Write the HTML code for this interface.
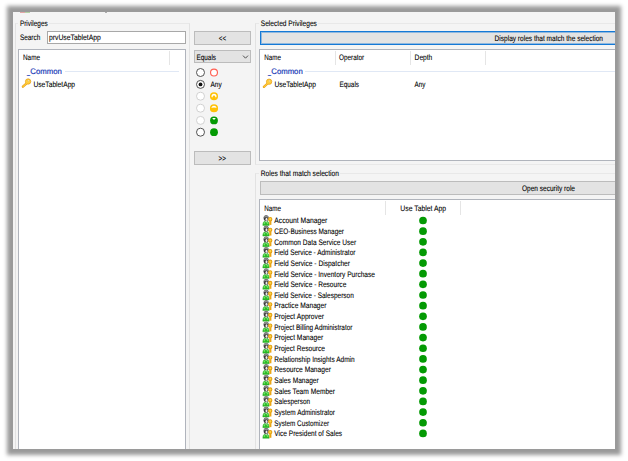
<!DOCTYPE html>
<html lang="en">
<head>
<meta charset="utf-8">
<title>Privileges</title>
<style>
html,body{margin:0;padding:0;background:#fff;}
body{width:628px;height:461px;overflow:hidden;position:relative;font-family:"Liberation Sans",sans-serif;}
#win{position:absolute;left:13px;top:12px;width:602px;height:437px;background:#f4f4f4;overflow:hidden;}
#shadow{position:absolute;left:13px;top:12px;width:602px;height:437px;box-shadow:0 0 4px 6px #9a9a9a;}
#win div{position:absolute;box-sizing:border-box;}
.t{position:absolute;left:0;top:0;white-space:pre;font-size:8.0px;line-height:9px;transform-origin:0 0;color:#000;text-rendering:geometricPrecision;-webkit-text-stroke:0.1px;}
.gb{border:1px solid;border-color:#e8e8e8 #e2e2e2;}
.lv{background:#fff;border:1px solid #b0b4bc;}
.btn{background:#e3e3e3;border:1px solid #bcbcbc;}
.sep{background:#e5e5e5;width:1px;}
.gl{background:#e0e8f5;height:1px;}
.lbl{background:#f4f4f4;height:8px;}
#ov{position:absolute;left:0;top:0;}
</style>
</head>
<body>
<div id="shadow"></div>
<div id="win">
<!-- title remnants -->
<div style="left:7px;top:0;width:5px;height:1px;background:#c44;opacity:.45"></div>
<div style="left:12px;top:0;width:5px;height:1px;background:#6a4;opacity:.45"></div>
<div style="left:92px;top:0;width:2px;height:1px;background:#555;opacity:.45"></div>
<!-- Privileges group -->
<div class="gb" style="left:2px;top:11px;width:175px;height:440px"></div>
<div class="lbl" style="left:5px;top:7px;width:31px"></div>
<div style="left:34px;top:19px;width:139px;height:13px;background:#fff;border:1px solid #a8a8a8"></div>
<div class="lv" style="left:5px;top:37px;width:168px;height:410px"></div>
<div class="sep" style="left:156px;top:39px;height:14px"></div>
<div class="gl" style="left:52px;top:59px;width:114px"></div>
<!-- middle column -->
<div class="btn" style="left:181px;top:19px;width:57px;height:14px"></div>
<div class="btn" style="left:181px;top:38px;width:57px;height:13px"></div>
<div class="btn" style="left:181px;top:139px;width:57px;height:14px"></div>
<!-- Selected Privileges group -->
<div class="gb" style="left:242px;top:11px;width:400px;height:142px"></div>
<div class="lbl" style="left:246px;top:7px;width:59px"></div>
<div class="btn" style="left:247px;top:19px;width:400px;height:14px;border:1px solid #1479d6;box-shadow:inset 0 0 0 1px rgba(20,121,214,.4)"></div>
<div class="lv" style="left:246px;top:37px;width:400px;height:112px"></div>
<div class="sep" style="left:322px;top:39px;height:14px"></div>
<div class="sep" style="left:397px;top:39px;height:14px"></div>
<div class="sep" style="left:472px;top:39px;height:14px"></div>
<div class="gl" style="left:292px;top:59px;width:330px"></div>
<!-- Roles that match selection group -->
<div class="gb" style="left:242px;top:161px;width:400px;height:300px"></div>
<div class="lbl" style="left:246px;top:157px;width:81px"></div>
<div class="btn" style="left:247px;top:169px;width:400px;height:14px"></div>
<div class="lv" style="left:246px;top:187px;width:400px;height:300px"></div>
<div class="sep" style="left:372px;top:189px;height:14px"></div>
<div class="sep" style="left:447px;top:189px;height:14px"></div>
<svg id="ov" width="602" height="437" viewBox="0 0 602 437">
<circle cx="187.50" cy="60.50" r="4" fill="#fff" stroke="#4a4a4a" stroke-width="0.95"/>
<circle cx="187.50" cy="72.40" r="4" fill="#fff" stroke="#4a4a4a" stroke-width="0.95"/>
<circle cx="187.50" cy="84.20" r="4" fill="#fff" stroke="#cfcfcf" stroke-width="0.95"/>
<circle cx="187.50" cy="96.20" r="4" fill="#fff" stroke="#cfcfcf" stroke-width="0.95"/>
<circle cx="187.50" cy="108.40" r="4" fill="#fff" stroke="#cfcfcf" stroke-width="0.95"/>
<circle cx="187.50" cy="120.20" r="4" fill="#fff" stroke="#4a4a4a" stroke-width="0.95"/>
<circle cx="187.50" cy="72.40" r="1.9" fill="#111"/>
<circle cx="201" cy="60.5" r="3.45" fill="#fff" stroke="#ff5f52" stroke-width="1.15"/>
<circle cx="201" cy="84.2" r="3.3" fill="#fff" stroke="#ffc107" stroke-width="1.5"/>
<path d="M197.7 85.2L204.3 85.2A3.6 3.6 0 0 1 197.7 85.2z" fill="#ffc107"/>
<circle cx="201" cy="84.9" r="1.35" fill="#ffc107"/>
<circle cx="201" cy="96.2" r="3.3" fill="#fff" stroke="#ffc107" stroke-width="1.5"/>
<path d="M197.1 96.0Q201 95.0 204.9 96.0A3.9 3.9 0 0 1 197.1 96.0z" fill="#ffc107"/>
<circle cx="201" cy="108.4" r="3.9" fill="#049a04"/>
<path d="M199.1 105.9L202.9 105.9L201 108.0z" fill="#fff"/>
<circle cx="201" cy="120.19999999999999" r="3.9" fill="#049a04"/>
<path d="M230 43.6L232.5 46.2L235 43.6" fill="none" stroke="#404040" stroke-width="0.9"/>
<g transform="translate(9,66)"><line x1="4.6" y1="5.3" x2="0.9" y2="8.7" stroke="#e9a11c" stroke-width="2.3" stroke-linecap="round"/><circle cx="6.1" cy="3.5" r="2.65" fill="#ffd040" stroke="#e9a11c" stroke-width="0.8"/><line x1="4.7" y1="5.2" x2="1" y2="8.6" stroke="#ffcd38" stroke-width="1.1" stroke-linecap="round"/><circle cx="6.5" cy="2.8" r="0.75" fill="#f6f2e6" stroke="#d9a030" stroke-width="0.3"/></g>
<g transform="translate(250,66.2)"><line x1="4.6" y1="5.3" x2="0.9" y2="8.7" stroke="#e9a11c" stroke-width="2.3" stroke-linecap="round"/><circle cx="6.1" cy="3.5" r="2.65" fill="#ffd040" stroke="#e9a11c" stroke-width="0.8"/><line x1="4.7" y1="5.2" x2="1" y2="8.6" stroke="#ffcd38" stroke-width="1.1" stroke-linecap="round"/><circle cx="6.5" cy="2.8" r="0.75" fill="#f6f2e6" stroke="#d9a030" stroke-width="0.3"/></g>
<g transform="translate(249.80,203.50)"><path d="M0 9.9C0 7 0.8 5.5 3.2 5.5C5.6 5.5 6.4 7 6.4 9.9z" fill="#2cbd27" stroke="#1f9e1b" stroke-width="0.4"/><ellipse cx="1.5" cy="7.6" rx="0.8" ry="1.1" fill="#74e068"/><ellipse cx="4.9" cy="7.6" rx="0.8" ry="1.1" fill="#74e068"/><path d="M2.5 5.6L3.3 7.4L4.1 5.6z" fill="#f3e6ef"/><ellipse cx="3.35" cy="2.6" rx="2.55" ry="2.9" fill="#3a3a3a"/><path d="M0.9 2.2C1 -0.9 5.7 -0.9 5.8 2.2C4.6 1.5 2.1 1.5 0.9 2.2z" fill="#8e8e8e"/><ellipse cx="3.7" cy="3.7" rx="1" ry="1.5" fill="#ececec"/><circle cx="7.4" cy="3.7" r="1.65" fill="#ffd544" stroke="#e3a012" stroke-width="1.1"/><rect x="6.5" y="5.5" width="2.1" height="3.9" fill="#e9a616"/></g>
<circle cx="410" cy="208.50" r="3.85" fill="#049a04"/>
<g transform="translate(249.80,214.15)"><path d="M0 9.9C0 7 0.8 5.5 3.2 5.5C5.6 5.5 6.4 7 6.4 9.9z" fill="#2cbd27" stroke="#1f9e1b" stroke-width="0.4"/><ellipse cx="1.5" cy="7.6" rx="0.8" ry="1.1" fill="#74e068"/><ellipse cx="4.9" cy="7.6" rx="0.8" ry="1.1" fill="#74e068"/><path d="M2.5 5.6L3.3 7.4L4.1 5.6z" fill="#f3e6ef"/><ellipse cx="3.35" cy="2.6" rx="2.55" ry="2.9" fill="#3a3a3a"/><path d="M0.9 2.2C1 -0.9 5.7 -0.9 5.8 2.2C4.6 1.5 2.1 1.5 0.9 2.2z" fill="#8e8e8e"/><ellipse cx="3.7" cy="3.7" rx="1" ry="1.5" fill="#ececec"/><circle cx="7.4" cy="3.7" r="1.65" fill="#ffd544" stroke="#e3a012" stroke-width="1.1"/><rect x="6.5" y="5.5" width="2.1" height="3.9" fill="#e9a616"/></g>
<circle cx="410" cy="219.15" r="3.85" fill="#049a04"/>
<g transform="translate(249.80,224.79)"><path d="M0 9.9C0 7 0.8 5.5 3.2 5.5C5.6 5.5 6.4 7 6.4 9.9z" fill="#2cbd27" stroke="#1f9e1b" stroke-width="0.4"/><ellipse cx="1.5" cy="7.6" rx="0.8" ry="1.1" fill="#74e068"/><ellipse cx="4.9" cy="7.6" rx="0.8" ry="1.1" fill="#74e068"/><path d="M2.5 5.6L3.3 7.4L4.1 5.6z" fill="#f3e6ef"/><ellipse cx="3.35" cy="2.6" rx="2.55" ry="2.9" fill="#3a3a3a"/><path d="M0.9 2.2C1 -0.9 5.7 -0.9 5.8 2.2C4.6 1.5 2.1 1.5 0.9 2.2z" fill="#8e8e8e"/><ellipse cx="3.7" cy="3.7" rx="1" ry="1.5" fill="#ececec"/><circle cx="7.4" cy="3.7" r="1.65" fill="#ffd544" stroke="#e3a012" stroke-width="1.1"/><rect x="6.5" y="5.5" width="2.1" height="3.9" fill="#e9a616"/></g>
<circle cx="410" cy="229.79" r="3.85" fill="#049a04"/>
<g transform="translate(249.80,235.44)"><path d="M0 9.9C0 7 0.8 5.5 3.2 5.5C5.6 5.5 6.4 7 6.4 9.9z" fill="#2cbd27" stroke="#1f9e1b" stroke-width="0.4"/><ellipse cx="1.5" cy="7.6" rx="0.8" ry="1.1" fill="#74e068"/><ellipse cx="4.9" cy="7.6" rx="0.8" ry="1.1" fill="#74e068"/><path d="M2.5 5.6L3.3 7.4L4.1 5.6z" fill="#f3e6ef"/><ellipse cx="3.35" cy="2.6" rx="2.55" ry="2.9" fill="#3a3a3a"/><path d="M0.9 2.2C1 -0.9 5.7 -0.9 5.8 2.2C4.6 1.5 2.1 1.5 0.9 2.2z" fill="#8e8e8e"/><ellipse cx="3.7" cy="3.7" rx="1" ry="1.5" fill="#ececec"/><circle cx="7.4" cy="3.7" r="1.65" fill="#ffd544" stroke="#e3a012" stroke-width="1.1"/><rect x="6.5" y="5.5" width="2.1" height="3.9" fill="#e9a616"/></g>
<circle cx="410" cy="240.44" r="3.85" fill="#049a04"/>
<g transform="translate(249.80,246.08)"><path d="M0 9.9C0 7 0.8 5.5 3.2 5.5C5.6 5.5 6.4 7 6.4 9.9z" fill="#2cbd27" stroke="#1f9e1b" stroke-width="0.4"/><ellipse cx="1.5" cy="7.6" rx="0.8" ry="1.1" fill="#74e068"/><ellipse cx="4.9" cy="7.6" rx="0.8" ry="1.1" fill="#74e068"/><path d="M2.5 5.6L3.3 7.4L4.1 5.6z" fill="#f3e6ef"/><ellipse cx="3.35" cy="2.6" rx="2.55" ry="2.9" fill="#3a3a3a"/><path d="M0.9 2.2C1 -0.9 5.7 -0.9 5.8 2.2C4.6 1.5 2.1 1.5 0.9 2.2z" fill="#8e8e8e"/><ellipse cx="3.7" cy="3.7" rx="1" ry="1.5" fill="#ececec"/><circle cx="7.4" cy="3.7" r="1.65" fill="#ffd544" stroke="#e3a012" stroke-width="1.1"/><rect x="6.5" y="5.5" width="2.1" height="3.9" fill="#e9a616"/></g>
<circle cx="410" cy="251.08" r="3.85" fill="#049a04"/>
<g transform="translate(249.80,256.72)"><path d="M0 9.9C0 7 0.8 5.5 3.2 5.5C5.6 5.5 6.4 7 6.4 9.9z" fill="#2cbd27" stroke="#1f9e1b" stroke-width="0.4"/><ellipse cx="1.5" cy="7.6" rx="0.8" ry="1.1" fill="#74e068"/><ellipse cx="4.9" cy="7.6" rx="0.8" ry="1.1" fill="#74e068"/><path d="M2.5 5.6L3.3 7.4L4.1 5.6z" fill="#f3e6ef"/><ellipse cx="3.35" cy="2.6" rx="2.55" ry="2.9" fill="#3a3a3a"/><path d="M0.9 2.2C1 -0.9 5.7 -0.9 5.8 2.2C4.6 1.5 2.1 1.5 0.9 2.2z" fill="#8e8e8e"/><ellipse cx="3.7" cy="3.7" rx="1" ry="1.5" fill="#ececec"/><circle cx="7.4" cy="3.7" r="1.65" fill="#ffd544" stroke="#e3a012" stroke-width="1.1"/><rect x="6.5" y="5.5" width="2.1" height="3.9" fill="#e9a616"/></g>
<circle cx="410" cy="261.72" r="3.85" fill="#049a04"/>
<g transform="translate(249.80,267.37)"><path d="M0 9.9C0 7 0.8 5.5 3.2 5.5C5.6 5.5 6.4 7 6.4 9.9z" fill="#2cbd27" stroke="#1f9e1b" stroke-width="0.4"/><ellipse cx="1.5" cy="7.6" rx="0.8" ry="1.1" fill="#74e068"/><ellipse cx="4.9" cy="7.6" rx="0.8" ry="1.1" fill="#74e068"/><path d="M2.5 5.6L3.3 7.4L4.1 5.6z" fill="#f3e6ef"/><ellipse cx="3.35" cy="2.6" rx="2.55" ry="2.9" fill="#3a3a3a"/><path d="M0.9 2.2C1 -0.9 5.7 -0.9 5.8 2.2C4.6 1.5 2.1 1.5 0.9 2.2z" fill="#8e8e8e"/><ellipse cx="3.7" cy="3.7" rx="1" ry="1.5" fill="#ececec"/><circle cx="7.4" cy="3.7" r="1.65" fill="#ffd544" stroke="#e3a012" stroke-width="1.1"/><rect x="6.5" y="5.5" width="2.1" height="3.9" fill="#e9a616"/></g>
<circle cx="410" cy="272.37" r="3.85" fill="#049a04"/>
<g transform="translate(249.80,278.01)"><path d="M0 9.9C0 7 0.8 5.5 3.2 5.5C5.6 5.5 6.4 7 6.4 9.9z" fill="#2cbd27" stroke="#1f9e1b" stroke-width="0.4"/><ellipse cx="1.5" cy="7.6" rx="0.8" ry="1.1" fill="#74e068"/><ellipse cx="4.9" cy="7.6" rx="0.8" ry="1.1" fill="#74e068"/><path d="M2.5 5.6L3.3 7.4L4.1 5.6z" fill="#f3e6ef"/><ellipse cx="3.35" cy="2.6" rx="2.55" ry="2.9" fill="#3a3a3a"/><path d="M0.9 2.2C1 -0.9 5.7 -0.9 5.8 2.2C4.6 1.5 2.1 1.5 0.9 2.2z" fill="#8e8e8e"/><ellipse cx="3.7" cy="3.7" rx="1" ry="1.5" fill="#ececec"/><circle cx="7.4" cy="3.7" r="1.65" fill="#ffd544" stroke="#e3a012" stroke-width="1.1"/><rect x="6.5" y="5.5" width="2.1" height="3.9" fill="#e9a616"/></g>
<circle cx="410" cy="283.01" r="3.85" fill="#049a04"/>
<g transform="translate(249.80,288.66)"><path d="M0 9.9C0 7 0.8 5.5 3.2 5.5C5.6 5.5 6.4 7 6.4 9.9z" fill="#2cbd27" stroke="#1f9e1b" stroke-width="0.4"/><ellipse cx="1.5" cy="7.6" rx="0.8" ry="1.1" fill="#74e068"/><ellipse cx="4.9" cy="7.6" rx="0.8" ry="1.1" fill="#74e068"/><path d="M2.5 5.6L3.3 7.4L4.1 5.6z" fill="#f3e6ef"/><ellipse cx="3.35" cy="2.6" rx="2.55" ry="2.9" fill="#3a3a3a"/><path d="M0.9 2.2C1 -0.9 5.7 -0.9 5.8 2.2C4.6 1.5 2.1 1.5 0.9 2.2z" fill="#8e8e8e"/><ellipse cx="3.7" cy="3.7" rx="1" ry="1.5" fill="#ececec"/><circle cx="7.4" cy="3.7" r="1.65" fill="#ffd544" stroke="#e3a012" stroke-width="1.1"/><rect x="6.5" y="5.5" width="2.1" height="3.9" fill="#e9a616"/></g>
<circle cx="410" cy="293.66" r="3.85" fill="#049a04"/>
<g transform="translate(249.80,299.31)"><path d="M0 9.9C0 7 0.8 5.5 3.2 5.5C5.6 5.5 6.4 7 6.4 9.9z" fill="#2cbd27" stroke="#1f9e1b" stroke-width="0.4"/><ellipse cx="1.5" cy="7.6" rx="0.8" ry="1.1" fill="#74e068"/><ellipse cx="4.9" cy="7.6" rx="0.8" ry="1.1" fill="#74e068"/><path d="M2.5 5.6L3.3 7.4L4.1 5.6z" fill="#f3e6ef"/><ellipse cx="3.35" cy="2.6" rx="2.55" ry="2.9" fill="#3a3a3a"/><path d="M0.9 2.2C1 -0.9 5.7 -0.9 5.8 2.2C4.6 1.5 2.1 1.5 0.9 2.2z" fill="#8e8e8e"/><ellipse cx="3.7" cy="3.7" rx="1" ry="1.5" fill="#ececec"/><circle cx="7.4" cy="3.7" r="1.65" fill="#ffd544" stroke="#e3a012" stroke-width="1.1"/><rect x="6.5" y="5.5" width="2.1" height="3.9" fill="#e9a616"/></g>
<circle cx="410" cy="304.31" r="3.85" fill="#049a04"/>
<g transform="translate(249.80,309.95)"><path d="M0 9.9C0 7 0.8 5.5 3.2 5.5C5.6 5.5 6.4 7 6.4 9.9z" fill="#2cbd27" stroke="#1f9e1b" stroke-width="0.4"/><ellipse cx="1.5" cy="7.6" rx="0.8" ry="1.1" fill="#74e068"/><ellipse cx="4.9" cy="7.6" rx="0.8" ry="1.1" fill="#74e068"/><path d="M2.5 5.6L3.3 7.4L4.1 5.6z" fill="#f3e6ef"/><ellipse cx="3.35" cy="2.6" rx="2.55" ry="2.9" fill="#3a3a3a"/><path d="M0.9 2.2C1 -0.9 5.7 -0.9 5.8 2.2C4.6 1.5 2.1 1.5 0.9 2.2z" fill="#8e8e8e"/><ellipse cx="3.7" cy="3.7" rx="1" ry="1.5" fill="#ececec"/><circle cx="7.4" cy="3.7" r="1.65" fill="#ffd544" stroke="#e3a012" stroke-width="1.1"/><rect x="6.5" y="5.5" width="2.1" height="3.9" fill="#e9a616"/></g>
<circle cx="410" cy="314.95" r="3.85" fill="#049a04"/>
<g transform="translate(249.80,320.59)"><path d="M0 9.9C0 7 0.8 5.5 3.2 5.5C5.6 5.5 6.4 7 6.4 9.9z" fill="#2cbd27" stroke="#1f9e1b" stroke-width="0.4"/><ellipse cx="1.5" cy="7.6" rx="0.8" ry="1.1" fill="#74e068"/><ellipse cx="4.9" cy="7.6" rx="0.8" ry="1.1" fill="#74e068"/><path d="M2.5 5.6L3.3 7.4L4.1 5.6z" fill="#f3e6ef"/><ellipse cx="3.35" cy="2.6" rx="2.55" ry="2.9" fill="#3a3a3a"/><path d="M0.9 2.2C1 -0.9 5.7 -0.9 5.8 2.2C4.6 1.5 2.1 1.5 0.9 2.2z" fill="#8e8e8e"/><ellipse cx="3.7" cy="3.7" rx="1" ry="1.5" fill="#ececec"/><circle cx="7.4" cy="3.7" r="1.65" fill="#ffd544" stroke="#e3a012" stroke-width="1.1"/><rect x="6.5" y="5.5" width="2.1" height="3.9" fill="#e9a616"/></g>
<circle cx="410" cy="325.59" r="3.85" fill="#049a04"/>
<g transform="translate(249.80,331.24)"><path d="M0 9.9C0 7 0.8 5.5 3.2 5.5C5.6 5.5 6.4 7 6.4 9.9z" fill="#2cbd27" stroke="#1f9e1b" stroke-width="0.4"/><ellipse cx="1.5" cy="7.6" rx="0.8" ry="1.1" fill="#74e068"/><ellipse cx="4.9" cy="7.6" rx="0.8" ry="1.1" fill="#74e068"/><path d="M2.5 5.6L3.3 7.4L4.1 5.6z" fill="#f3e6ef"/><ellipse cx="3.35" cy="2.6" rx="2.55" ry="2.9" fill="#3a3a3a"/><path d="M0.9 2.2C1 -0.9 5.7 -0.9 5.8 2.2C4.6 1.5 2.1 1.5 0.9 2.2z" fill="#8e8e8e"/><ellipse cx="3.7" cy="3.7" rx="1" ry="1.5" fill="#ececec"/><circle cx="7.4" cy="3.7" r="1.65" fill="#ffd544" stroke="#e3a012" stroke-width="1.1"/><rect x="6.5" y="5.5" width="2.1" height="3.9" fill="#e9a616"/></g>
<circle cx="410" cy="336.24" r="3.85" fill="#049a04"/>
<g transform="translate(249.80,341.88)"><path d="M0 9.9C0 7 0.8 5.5 3.2 5.5C5.6 5.5 6.4 7 6.4 9.9z" fill="#2cbd27" stroke="#1f9e1b" stroke-width="0.4"/><ellipse cx="1.5" cy="7.6" rx="0.8" ry="1.1" fill="#74e068"/><ellipse cx="4.9" cy="7.6" rx="0.8" ry="1.1" fill="#74e068"/><path d="M2.5 5.6L3.3 7.4L4.1 5.6z" fill="#f3e6ef"/><ellipse cx="3.35" cy="2.6" rx="2.55" ry="2.9" fill="#3a3a3a"/><path d="M0.9 2.2C1 -0.9 5.7 -0.9 5.8 2.2C4.6 1.5 2.1 1.5 0.9 2.2z" fill="#8e8e8e"/><ellipse cx="3.7" cy="3.7" rx="1" ry="1.5" fill="#ececec"/><circle cx="7.4" cy="3.7" r="1.65" fill="#ffd544" stroke="#e3a012" stroke-width="1.1"/><rect x="6.5" y="5.5" width="2.1" height="3.9" fill="#e9a616"/></g>
<circle cx="410" cy="346.88" r="3.85" fill="#049a04"/>
<g transform="translate(249.80,352.53)"><path d="M0 9.9C0 7 0.8 5.5 3.2 5.5C5.6 5.5 6.4 7 6.4 9.9z" fill="#2cbd27" stroke="#1f9e1b" stroke-width="0.4"/><ellipse cx="1.5" cy="7.6" rx="0.8" ry="1.1" fill="#74e068"/><ellipse cx="4.9" cy="7.6" rx="0.8" ry="1.1" fill="#74e068"/><path d="M2.5 5.6L3.3 7.4L4.1 5.6z" fill="#f3e6ef"/><ellipse cx="3.35" cy="2.6" rx="2.55" ry="2.9" fill="#3a3a3a"/><path d="M0.9 2.2C1 -0.9 5.7 -0.9 5.8 2.2C4.6 1.5 2.1 1.5 0.9 2.2z" fill="#8e8e8e"/><ellipse cx="3.7" cy="3.7" rx="1" ry="1.5" fill="#ececec"/><circle cx="7.4" cy="3.7" r="1.65" fill="#ffd544" stroke="#e3a012" stroke-width="1.1"/><rect x="6.5" y="5.5" width="2.1" height="3.9" fill="#e9a616"/></g>
<circle cx="410" cy="357.53" r="3.85" fill="#049a04"/>
<g transform="translate(249.80,363.18)"><path d="M0 9.9C0 7 0.8 5.5 3.2 5.5C5.6 5.5 6.4 7 6.4 9.9z" fill="#2cbd27" stroke="#1f9e1b" stroke-width="0.4"/><ellipse cx="1.5" cy="7.6" rx="0.8" ry="1.1" fill="#74e068"/><ellipse cx="4.9" cy="7.6" rx="0.8" ry="1.1" fill="#74e068"/><path d="M2.5 5.6L3.3 7.4L4.1 5.6z" fill="#f3e6ef"/><ellipse cx="3.35" cy="2.6" rx="2.55" ry="2.9" fill="#3a3a3a"/><path d="M0.9 2.2C1 -0.9 5.7 -0.9 5.8 2.2C4.6 1.5 2.1 1.5 0.9 2.2z" fill="#8e8e8e"/><ellipse cx="3.7" cy="3.7" rx="1" ry="1.5" fill="#ececec"/><circle cx="7.4" cy="3.7" r="1.65" fill="#ffd544" stroke="#e3a012" stroke-width="1.1"/><rect x="6.5" y="5.5" width="2.1" height="3.9" fill="#e9a616"/></g>
<circle cx="410" cy="368.18" r="3.85" fill="#049a04"/>
<g transform="translate(249.80,373.82)"><path d="M0 9.9C0 7 0.8 5.5 3.2 5.5C5.6 5.5 6.4 7 6.4 9.9z" fill="#2cbd27" stroke="#1f9e1b" stroke-width="0.4"/><ellipse cx="1.5" cy="7.6" rx="0.8" ry="1.1" fill="#74e068"/><ellipse cx="4.9" cy="7.6" rx="0.8" ry="1.1" fill="#74e068"/><path d="M2.5 5.6L3.3 7.4L4.1 5.6z" fill="#f3e6ef"/><ellipse cx="3.35" cy="2.6" rx="2.55" ry="2.9" fill="#3a3a3a"/><path d="M0.9 2.2C1 -0.9 5.7 -0.9 5.8 2.2C4.6 1.5 2.1 1.5 0.9 2.2z" fill="#8e8e8e"/><ellipse cx="3.7" cy="3.7" rx="1" ry="1.5" fill="#ececec"/><circle cx="7.4" cy="3.7" r="1.65" fill="#ffd544" stroke="#e3a012" stroke-width="1.1"/><rect x="6.5" y="5.5" width="2.1" height="3.9" fill="#e9a616"/></g>
<circle cx="410" cy="378.82" r="3.85" fill="#049a04"/>
<g transform="translate(249.80,384.46)"><path d="M0 9.9C0 7 0.8 5.5 3.2 5.5C5.6 5.5 6.4 7 6.4 9.9z" fill="#2cbd27" stroke="#1f9e1b" stroke-width="0.4"/><ellipse cx="1.5" cy="7.6" rx="0.8" ry="1.1" fill="#74e068"/><ellipse cx="4.9" cy="7.6" rx="0.8" ry="1.1" fill="#74e068"/><path d="M2.5 5.6L3.3 7.4L4.1 5.6z" fill="#f3e6ef"/><ellipse cx="3.35" cy="2.6" rx="2.55" ry="2.9" fill="#3a3a3a"/><path d="M0.9 2.2C1 -0.9 5.7 -0.9 5.8 2.2C4.6 1.5 2.1 1.5 0.9 2.2z" fill="#8e8e8e"/><ellipse cx="3.7" cy="3.7" rx="1" ry="1.5" fill="#ececec"/><circle cx="7.4" cy="3.7" r="1.65" fill="#ffd544" stroke="#e3a012" stroke-width="1.1"/><rect x="6.5" y="5.5" width="2.1" height="3.9" fill="#e9a616"/></g>
<circle cx="410" cy="389.46" r="3.85" fill="#049a04"/>
<g transform="translate(249.80,395.11)"><path d="M0 9.9C0 7 0.8 5.5 3.2 5.5C5.6 5.5 6.4 7 6.4 9.9z" fill="#2cbd27" stroke="#1f9e1b" stroke-width="0.4"/><ellipse cx="1.5" cy="7.6" rx="0.8" ry="1.1" fill="#74e068"/><ellipse cx="4.9" cy="7.6" rx="0.8" ry="1.1" fill="#74e068"/><path d="M2.5 5.6L3.3 7.4L4.1 5.6z" fill="#f3e6ef"/><ellipse cx="3.35" cy="2.6" rx="2.55" ry="2.9" fill="#3a3a3a"/><path d="M0.9 2.2C1 -0.9 5.7 -0.9 5.8 2.2C4.6 1.5 2.1 1.5 0.9 2.2z" fill="#8e8e8e"/><ellipse cx="3.7" cy="3.7" rx="1" ry="1.5" fill="#ececec"/><circle cx="7.4" cy="3.7" r="1.65" fill="#ffd544" stroke="#e3a012" stroke-width="1.1"/><rect x="6.5" y="5.5" width="2.1" height="3.9" fill="#e9a616"/></g>
<circle cx="410" cy="400.11" r="3.85" fill="#049a04"/>
<g transform="translate(249.80,405.75)"><path d="M0 9.9C0 7 0.8 5.5 3.2 5.5C5.6 5.5 6.4 7 6.4 9.9z" fill="#2cbd27" stroke="#1f9e1b" stroke-width="0.4"/><ellipse cx="1.5" cy="7.6" rx="0.8" ry="1.1" fill="#74e068"/><ellipse cx="4.9" cy="7.6" rx="0.8" ry="1.1" fill="#74e068"/><path d="M2.5 5.6L3.3 7.4L4.1 5.6z" fill="#f3e6ef"/><ellipse cx="3.35" cy="2.6" rx="2.55" ry="2.9" fill="#3a3a3a"/><path d="M0.9 2.2C1 -0.9 5.7 -0.9 5.8 2.2C4.6 1.5 2.1 1.5 0.9 2.2z" fill="#8e8e8e"/><ellipse cx="3.7" cy="3.7" rx="1" ry="1.5" fill="#ececec"/><circle cx="7.4" cy="3.7" r="1.65" fill="#ffd544" stroke="#e3a012" stroke-width="1.1"/><rect x="6.5" y="5.5" width="2.1" height="3.9" fill="#e9a616"/></g>
<circle cx="410" cy="410.75" r="3.85" fill="#049a04"/>
<g transform="translate(249.80,416.40)"><path d="M0 9.9C0 7 0.8 5.5 3.2 5.5C5.6 5.5 6.4 7 6.4 9.9z" fill="#2cbd27" stroke="#1f9e1b" stroke-width="0.4"/><ellipse cx="1.5" cy="7.6" rx="0.8" ry="1.1" fill="#74e068"/><ellipse cx="4.9" cy="7.6" rx="0.8" ry="1.1" fill="#74e068"/><path d="M2.5 5.6L3.3 7.4L4.1 5.6z" fill="#f3e6ef"/><ellipse cx="3.35" cy="2.6" rx="2.55" ry="2.9" fill="#3a3a3a"/><path d="M0.9 2.2C1 -0.9 5.7 -0.9 5.8 2.2C4.6 1.5 2.1 1.5 0.9 2.2z" fill="#8e8e8e"/><ellipse cx="3.7" cy="3.7" rx="1" ry="1.5" fill="#ececec"/><circle cx="7.4" cy="3.7" r="1.65" fill="#ffd544" stroke="#e3a012" stroke-width="1.1"/><rect x="6.5" y="5.5" width="2.1" height="3.9" fill="#e9a616"/></g>
<circle cx="410" cy="421.40" r="3.85" fill="#049a04"/>
</svg>
<span class="t" style="transform:translate(6.90px,7px) scaleX(0.8014)">Privileges</span>
<span class="t" style="transform:translate(6.90px,21px) scaleX(0.8005)">Search</span>
<span class="t" style="transform:translate(36.00px,21px) scaleX(0.8503)">prvUseTabletApp</span>
<span class="t" style="transform:translate(10.00px,41px) scaleX(0.7965)">Name</span>
<span class="t" style="transform:translate(14.00px,55px) scaleX(0.6512);color:#1a3cb8;-webkit-text-stroke:0.2px">_</span>
<span class="t" style="transform:translate(17.30px,55px) scaleX(0.9706);color:#1a3cb8;-webkit-text-stroke:0.2px">Common</span>
<span class="t" style="transform:translate(20.40px,68px) scaleX(0.8371)">UseTabletApp</span>
<span class="t" style="transform:translate(205.80px,22px) scaleX(0.7706)">&lt;&lt;</span>
<span class="t" style="transform:translate(183.50px,41px) scaleX(0.7969)">Equals</span>
<span class="t" style="transform:translate(197.50px,68px) scaleX(0.8118)">Any</span>
<span class="t" style="transform:translate(205.40px,142px) scaleX(0.8134)">&gt;&gt;</span>
<span class="t" style="transform:translate(247.80px,7px) scaleX(0.8244)">Selected Privileges</span>
<span class="t" style="transform:translate(481.60px,22px) scaleX(0.8180)">Display roles that match the selection</span>
<span class="t" style="transform:translate(251.30px,41px) scaleX(0.7824)">Name</span>
<span class="t" style="transform:translate(326.00px,41px) scaleX(0.7980)">Operator</span>
<span class="t" style="transform:translate(401.60px,41px) scaleX(0.8287)">Depth</span>
<span class="t" style="transform:translate(255.00px,55px) scaleX(0.6512);color:#1a3cb8;-webkit-text-stroke:0.2px">_</span>
<span class="t" style="transform:translate(258.30px,55px) scaleX(0.9675);color:#1a3cb8;-webkit-text-stroke:0.2px">Common</span>
<span class="t" style="transform:translate(261.40px,68px) scaleX(0.8351)">UseTabletApp</span>
<span class="t" style="transform:translate(326.50px,68px) scaleX(0.7969)">Equals</span>
<span class="t" style="transform:translate(401.60px,68px) scaleX(0.7900)">Any</span>
<span class="t" style="transform:translate(247.80px,157px) scaleX(0.8324)">Roles that match selection</span>
<span class="t" style="transform:translate(509.00px,172px) scaleX(0.8164)">Open security role</span>
<span class="t" style="transform:translate(251.20px,192px) scaleX(0.7871)">Name</span>
<span class="t" style="transform:translate(387.30px,192px) scaleX(0.8533)">Use Tablet App</span>
<span class="t" style="transform:translate(261.30px,204px) scaleX(0.8453)">Account Manager</span>
<span class="t" style="transform:translate(261.30px,215px) scaleX(0.8080)">CEO-Business Manager</span>
<span class="t" style="transform:translate(261.30px,226px) scaleX(0.8213)">Common Data Service User</span>
<span class="t" style="transform:translate(261.30px,236px) scaleX(0.8107)">Field Service - Administrator</span>
<span class="t" style="transform:translate(261.30px,247px) scaleX(0.8265)">Field Service - Dispatcher</span>
<span class="t" style="transform:translate(261.30px,258px) scaleX(0.8235)">Field Service - Inventory Purchase</span>
<span class="t" style="transform:translate(261.30px,268px) scaleX(0.8220)">Field Service - Resource</span>
<span class="t" style="transform:translate(261.30px,279px) scaleX(0.8126)">Field Service - Salesperson</span>
<span class="t" style="transform:translate(261.30px,289px) scaleX(0.8325)">Practice Manager</span>
<span class="t" style="transform:translate(261.30px,300px) scaleX(0.8387)">Project Approver</span>
<span class="t" style="transform:translate(261.30px,311px) scaleX(0.8021)">Project Billing Administrator</span>
<span class="t" style="transform:translate(261.30px,321px) scaleX(0.8313)">Project Manager</span>
<span class="t" style="transform:translate(261.30px,332px) scaleX(0.8263)">Project Resource</span>
<span class="t" style="transform:translate(261.30px,343px) scaleX(0.8181)">Relationship Insights Admin</span>
<span class="t" style="transform:translate(261.30px,353px) scaleX(0.8318)">Resource Manager</span>
<span class="t" style="transform:translate(261.30px,364px) scaleX(0.8251)">Sales Manager</span>
<span class="t" style="transform:translate(261.30px,375px) scaleX(0.8290)">Sales Team Member</span>
<span class="t" style="transform:translate(261.30px,385px) scaleX(0.8048)">Salesperson</span>
<span class="t" style="transform:translate(261.30px,396px) scaleX(0.8031)">System Administrator</span>
<span class="t" style="transform:translate(261.30px,407px) scaleX(0.7886)">System Customizer</span>
<span class="t" style="transform:translate(261.30px,417px) scaleX(0.8210)">Vice President of Sales</span>
</div>
</body>
</html>
